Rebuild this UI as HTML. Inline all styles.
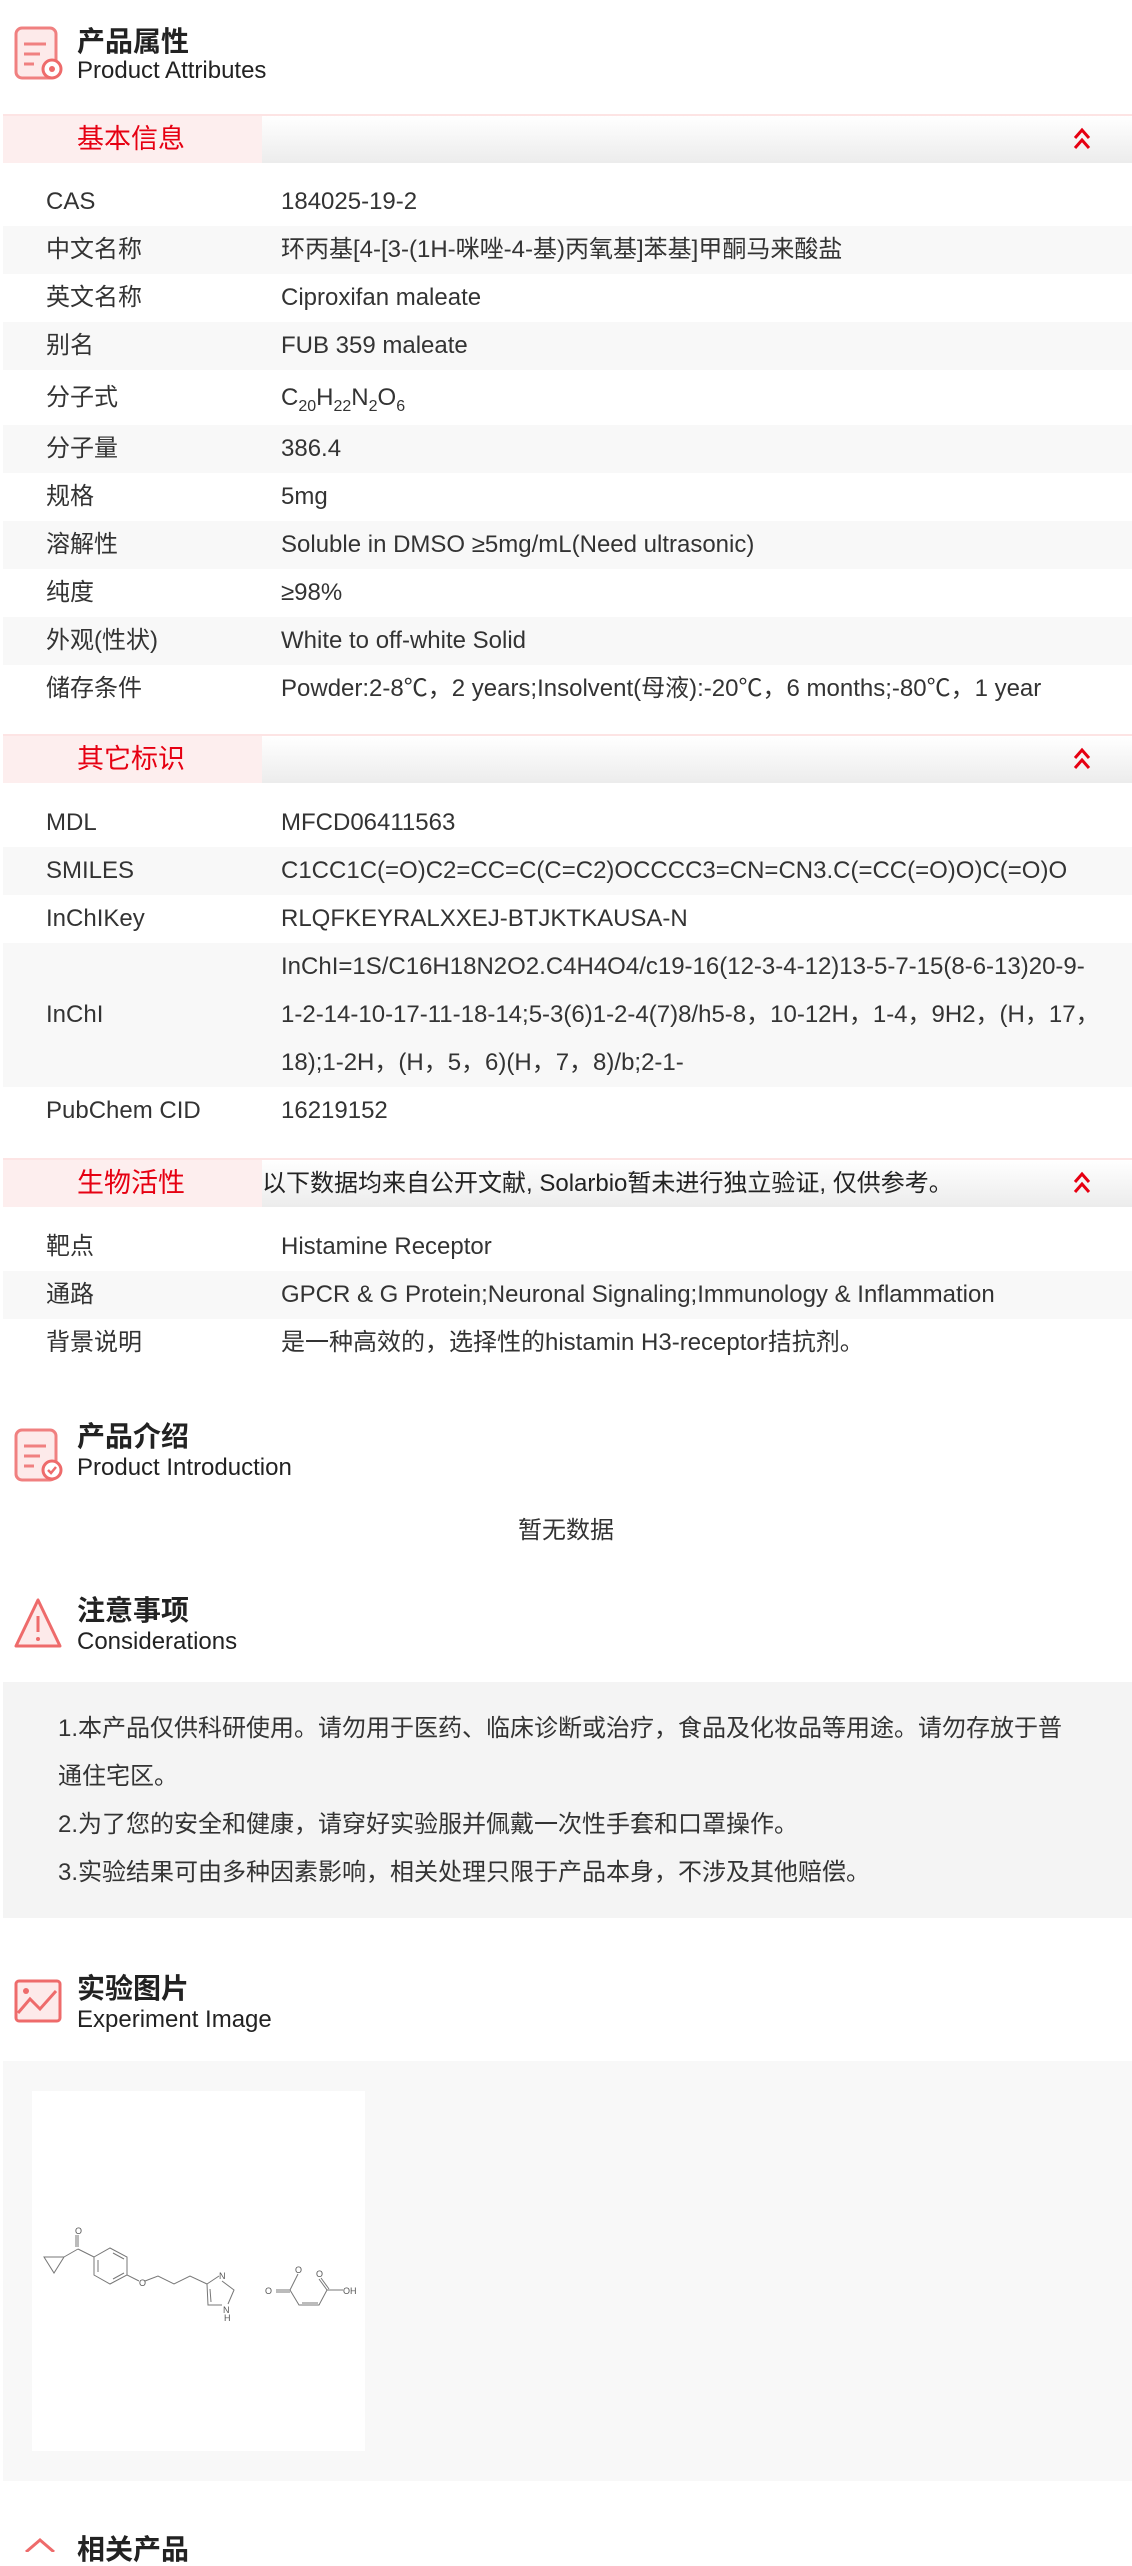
<!DOCTYPE html>
<html><head><meta charset="utf-8">
<style>
*{margin:0;padding:0;box-sizing:border-box}
body{width:1132px;height:2552px;background:#fff;position:relative;overflow:hidden;font-family:"Liberation Sans","Noto Sans CJK SC",sans-serif;color:#333}
.a{position:absolute}
.tt{position:absolute;left:77px;font-size:28px;font-weight:bold;color:#222;line-height:32px}
.ts{position:absolute;left:77px;font-size:24px;color:#222;line-height:26px}
.bar{position:absolute;left:3px;width:1129px;height:49px;border-top:2px solid #fde4e4;background:linear-gradient(#fff,#ececec)}
.bar .l{position:absolute;left:0;top:0;width:259px;height:47px;background:#fdeeee;color:#e60012;font-size:27px;line-height:47px;padding-left:74px}
.bar .c{position:absolute;right:40px;top:8px}
.bar .n{position:absolute;left:259px;top:0;line-height:47px;font-size:24px;color:#222}
.row{position:absolute;left:3px;width:1129px;height:48px;font-size:24px;line-height:48px}
.row.g{background:#f8f8f8}
.row .k{position:absolute;left:43px}
.row .v{position:absolute;left:278px}
sub{font-size:16px;vertical-align:-6px;line-height:0}
</style></head><body>

<svg class="a" style="left:12px;top:24px" width="56" height="60" viewBox="0 0 56 60"><rect x="4" y="4" width="40" height="50" rx="6" fill="#fdeaea" stroke="#f08080" stroke-width="3"/><path d="M12 20h22M12 30h16M12 40h10" stroke="#f08080" stroke-width="3"/><circle cx="40" cy="45" r="9" fill="#fff" stroke="#ee6b6b" stroke-width="3"/><circle cx="40" cy="45" r="3" fill="#ee6b6b"/></svg>
<div class="tt" style="top:26px">产品属性</div>
<div class="ts" style="top:58px">Product Attributes</div>

<div class="bar" style="top:114px"><div class="l">基本信息</div><svg class="c" width="20" height="28" viewBox="0 0 20 28"><path d="M3 14l7-8 7 8M3 24l7-8 7 8" fill="none" stroke="#e60012" stroke-width="3"/></svg></div>

<div class="row" style="top:178px"><span class="k">CAS</span><span class="v">184025-19-2</span></div>
<div class="row g" style="top:226px"><span class="k">中文名称</span><span class="v">环丙基[4-[3-(1H-咪唑-4-基)丙氧基]苯基]甲酮马来酸盐</span></div>
<div class="row" style="top:274px"><span class="k">英文名称</span><span class="v">Ciproxifan maleate</span></div>
<div class="row g" style="top:322px"><span class="k">别名</span><span class="v">FUB 359 maleate</span></div>
<div class="row" style="top:370px;height:55px;line-height:55px"><span class="k">分子式</span><span class="v">C<sub>20</sub>H<sub>22</sub>N<sub>2</sub>O<sub>6</sub></span></div>
<div class="row g" style="top:425px"><span class="k">分子量</span><span class="v">386.4</span></div>
<div class="row" style="top:473px"><span class="k">规格</span><span class="v">5mg</span></div>
<div class="row g" style="top:521px"><span class="k">溶解性</span><span class="v">Soluble in DMSO ≥5mg/mL(Need ultrasonic)</span></div>
<div class="row" style="top:569px"><span class="k">纯度</span><span class="v">≥98%</span></div>
<div class="row g" style="top:617px"><span class="k">外观(性状)</span><span class="v">White to off-white Solid</span></div>
<div class="row" style="top:665px"><span class="k">储存条件</span><span class="v">Powder:2-8℃，2 years;Insolvent(母液):-20℃，6 months;-80℃，1 year</span></div>

<div class="bar" style="top:734px"><div class="l">其它标识</div><svg class="c" width="20" height="28" viewBox="0 0 20 28"><path d="M3 14l7-8 7 8M3 24l7-8 7 8" fill="none" stroke="#e60012" stroke-width="3"/></svg></div>

<div class="row" style="top:799px"><span class="k">MDL</span><span class="v">MFCD06411563</span></div>
<div class="row g" style="top:847px"><span class="k">SMILES</span><span class="v">C1CC1C(=O)C2=CC=C(C=C2)OCCCC3=CN=CN3.C(=CC(=O)O)C(=O)O</span></div>
<div class="row" style="top:895px"><span class="k">InChIKey</span><span class="v">RLQFKEYRALXXEJ-BTJKTKAUSA-N</span></div>
<div class="row g" style="top:943px;height:144px"><span class="k" style="top:48px">InChI</span><span class="v" style="width:825px;line-height:48px">InChI=1S/C16H18N2O2.C4H4O4/c19-16(12-3-4-12)13-5-7-15(8-6-13)20-9-1-2-14-10-17-11-18-14;5-3(6)1-2-4(7)8/h5-8，10-12H，1-4，9H2，(H，17，18);1-2H，(H，5，6)(H，7，8)/b;2-1-</span></div>
<div class="row" style="top:1087px"><span class="k">PubChem CID</span><span class="v">16219152</span></div>

<div class="bar" style="top:1158px"><div class="l">生物活性</div><div class="n">以下数据均来自公开文献, Solarbio暂未进行独立验证, 仅供参考。</div><svg class="c" width="20" height="28" viewBox="0 0 20 28"><path d="M3 14l7-8 7 8M3 24l7-8 7 8" fill="none" stroke="#e60012" stroke-width="3"/></svg></div>

<div class="row" style="top:1223px"><span class="k">靶点</span><span class="v">Histamine Receptor</span></div>
<div class="row g" style="top:1271px"><span class="k">通路</span><span class="v">GPCR &amp; G Protein;Neuronal Signaling;Immunology &amp; Inflammation</span></div>
<div class="row" style="top:1319px"><span class="k">背景说明</span><span class="v">是一种高效的，选择性的histamin H3-receptor拮抗剂。</span></div>

<svg class="a" style="left:12px;top:1420px" width="56" height="66" viewBox="0 0 56 66"><rect x="4" y="10" width="40" height="50" rx="6" fill="#fdeaea" stroke="#f08080" stroke-width="3"/><path d="M12 26h22M12 36h16M12 46h10" stroke="#f08080" stroke-width="3"/><circle cx="40" cy="50" r="9" fill="#fff" stroke="#ee6b6b" stroke-width="3"/><path d="M36 50l3 3 5-6" fill="none" stroke="#ee6b6b" stroke-width="2.5"/></svg>
<div class="tt" style="top:1421px">产品介绍</div>
<div class="ts" style="top:1455px">Product Introduction</div>
<div class="a" style="left:0;width:1132px;top:1517px;text-align:center;font-size:24px;line-height:28px">暂无数据</div>

<svg class="a" style="left:12px;top:1594px" width="56" height="58" viewBox="0 0 56 58"><path d="M26 6L4 52h44z" fill="#fdeaea" stroke="#ee6b6b" stroke-width="3" stroke-linejoin="round"/><path d="M26 22v16" stroke="#ee6b6b" stroke-width="3"/><circle cx="26" cy="45" r="2" fill="#ee6b6b"/></svg>
<div class="tt" style="top:1595px">注意事项</div>
<div class="ts" style="top:1629px">Considerations</div>
<div class="a" style="left:3px;top:1682px;width:1129px;height:236px;background:#f4f4f4;padding:23px 50px 0 55px;font-size:24px;line-height:48px;color:#333">1.本产品仅供科研使用。请勿用于医药、临床诊断或治疗，食品及化妆品等用途。请勿存放于普通住宅区。<br>2.为了您的安全和健康，请穿好实验服并佩戴一次性手套和口罩操作。<br>3.实验结果可由多种因素影响，相关处理只限于产品本身，不涉及其他赔偿。</div>

<svg class="a" style="left:12px;top:1975px" width="56" height="60" viewBox="0 0 56 60"><rect x="4" y="6" width="44" height="40" rx="3" fill="#fdeaea" stroke="#ee6b6b" stroke-width="3"/><path d="M6 38l12-14 10 10 16-18" fill="none" stroke="#ee6b6b" stroke-width="3"/><circle cx="14" cy="16" r="3" fill="#ee6b6b"/></svg>
<div class="tt" style="top:1973px">实验图片</div>
<div class="ts" style="top:2007px">Experiment Image</div>
<div class="a" style="left:3px;top:2061px;width:1129px;height:420px;background:#f8f8f8"></div>
<svg class="a" style="left:32px;top:2091px;background:#fff" width="333" height="360" viewBox="0 0 333 360" font-family="Liberation Sans" font-size="9" fill="#555">
<g stroke="#777" stroke-width="1" fill="none">
<path d="M46 144v12M44 144v12"/>
<path d="M46 158L32 166M12 166h20L22 182z"/>
<path d="M46 158L62 166M78 157l17 9v18l-17 9-16-9v-18zM81 162l11 6M81 188l11-6M66 169v12"/>
<path d="M95 184l12 6M113 190l13-5 16 8 16-8 17 8"/>
<path d="M175 193l12-8M190 190l12 9-6 14M190 214l-14 0-1-21M178 198l1 13"/>
<path d="M244 199h14l8-16M244 201h14M258 199l9 15h20l8-15M270 212h16M295 199l-8-11M297 198l-8-11M295 199h16"/>
</g>
<g stroke="none">
<text x="43" y="143">O</text><text x="107" y="195">O</text><text x="187" y="188">N</text><text x="191" y="222">N</text><text x="192" y="230">H</text>
<text x="233" y="203">O</text><text x="263" y="182">O</text><text x="284" y="186">O</text><text x="311" y="203">OH</text>
</g>
</svg>

<svg class="a" style="left:22px;top:2538px" width="40" height="14"><path d="M4 14L18 2l14 12" fill="none" stroke="#ee6b6b" stroke-width="3"/></svg>
<div class="tt" style="top:2534px">相关产品</div>
</body></html>
